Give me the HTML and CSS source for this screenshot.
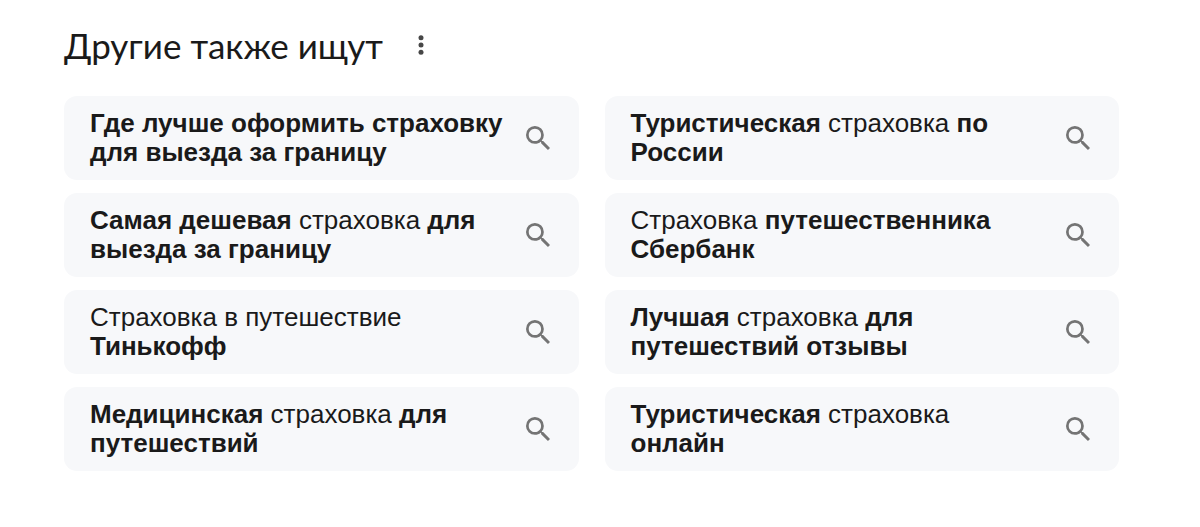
FILE: index.html
```html
<!DOCTYPE html>
<html lang="ru">
<head>
  <meta charset="UTF-8" />
  <meta name="viewport" content="width=device-width, initial-scale=1.0"/>
  <title>Другие также ищут</title>
  <link rel="stylesheet" href="styles.css">
</head>
<body>
  <svg class="sprite" aria-hidden="true">
    <symbol id="search" viewBox="3 3 17.49 17.49">
      <path d="M15.5 14h-.79l-.28-.27A6.471 6.471 0 0 0 16 9.5 6.5 6.5 0 1 0 9.5 16c1.61 0 3.09-.59 4.23-1.57l.27.28v.79l5 4.99L20.49 19l-4.99-5zm-6 0C7.01 14 5 11.99 5 9.5S7.01 5 9.5 5 14 7.01 14 9.5 11.99 14 9.5 14z"/>
    </symbol>
  </svg>

  <section class="related">
    <div class="heading">
      <h2>Другие также ищут</h2>
      <button class="more" aria-label="Ещё">
        <svg width="8" height="20" viewBox="0 0 8 20">
          <circle cx="4" cy="2.7" r="2.5"/>
          <circle cx="4" cy="10" r="2.5"/>
          <circle cx="4" cy="17.3" r="2.5"/>
        </svg>
      </button>
    </div>

    <div class="grid">
      <a class="item" href="#">
        <span class="text"><b>Где лучше оформить страховку для выезда за границу</b></span>
        <svg class="icon"><use href="#search"/></svg>
      </a>
      <a class="item" href="#">
        <span class="text"><b>Туристическая</b> страховка <b>по России</b></span>
        <svg class="icon"><use href="#search"/></svg>
      </a>
      <a class="item" href="#">
        <span class="text"><b>Самая дешевая</b> страховка <b>для выезда за границу</b></span>
        <svg class="icon"><use href="#search"/></svg>
      </a>
      <a class="item" href="#">
        <span class="text">Страховка <b>путешественника Сбербанк</b></span>
        <svg class="icon"><use href="#search"/></svg>
      </a>
      <a class="item" href="#">
        <span class="text">Страховка в путешествие <b>Тинькофф</b></span>
        <svg class="icon"><use href="#search"/></svg>
      </a>
      <a class="item" href="#">
        <span class="text"><b>Лучшая</b> страховка <b>для путешествий отзывы</b></span>
        <svg class="icon"><use href="#search"/></svg>
      </a>
      <a class="item" href="#">
        <span class="text"><b>Медицинская</b> страховка <b>для путешествий</b></span>
        <svg class="icon"><use href="#search"/></svg>
      </a>
      <a class="item" href="#">
        <span class="text"><b>Туристическая</b> страховка <b>онлайн</b></span>
        <svg class="icon"><use href="#search"/></svg>
      </a>
    </div>
  </section>
</body>
</html>
```

FILE: styles.css
```css
body {
  margin: 0;
  background-color: #ffffff;
  color: #1a1a1a;
  font-family: "Liberation Sans", Arial, sans-serif;
}

.sprite {
  display: none;
}

.related {
  padding: 24px 81px 56px 64px;
}

.heading {
  display: flex;
  align-items: center;
  gap: 26px;
  margin-bottom: 30px;
}

h2 {
  margin: 0;
  font-family: Lato, sans-serif;
  font-size: 35px;
  font-weight: 400;
  line-height: 42px;
}

.more {
  display: flex;
  padding: 8px;
  border: none;
  background: none;
  cursor: pointer;
  fill: #474747;
}

.grid {
  display: grid;
  grid-template-columns: 1fr 1fr;
  gap: 13px 26px;
}

.item {
  display: flex;
  align-items: center;
  justify-content: space-between;
  gap: 16px;
  min-height: 58px;
  padding: 13px 29px 13px 26px;
  border-radius: 13px;
  background-color: #f7f8fa;
  color: inherit;
  font-size: 26px;
  line-height: 29px;
  text-decoration: none;
}

.item:hover {
  background-color: #eceef1;
}

.icon {
  flex: none;
  width: 24px;
  height: 24px;
  fill: #747474;
}
```
